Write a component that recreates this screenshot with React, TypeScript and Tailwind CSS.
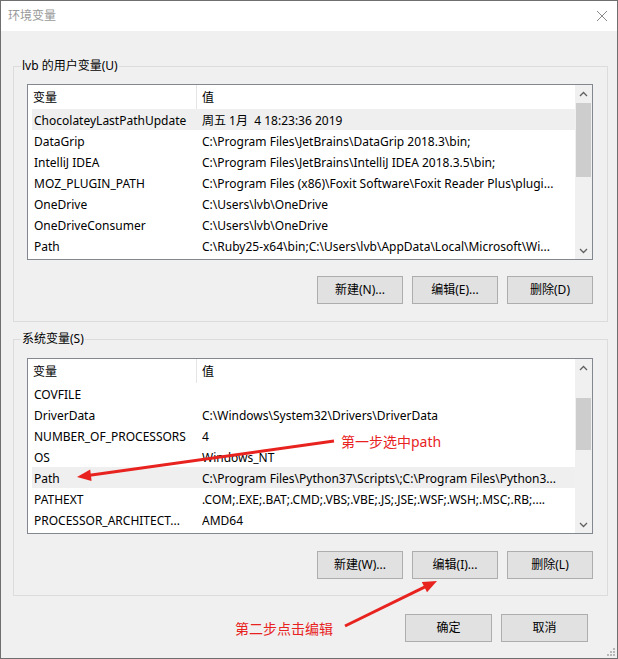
import React from "react";

const FONT = { fontFamily: '"Noto Sans", "Noto Sans CJK SC", sans-serif' };

type Row = [string, string];

const userRows: Row[] = [
  ["ChocolateyLastPathUpdate", "周五 1月  4 18:23:36 2019"],
  ["DataGrip", "C:\\Program Files\\JetBrains\\DataGrip 2018.3\\bin;"],
  ["IntelliJ IDEA", "C:\\Program Files\\JetBrains\\IntelliJ IDEA 2018.3.5\\bin;"],
  ["MOZ_PLUGIN_PATH", "C:\\Program Files (x86)\\Foxit Software\\Foxit Reader Plus\\plugi..."],
  ["OneDrive", "C:\\Users\\lvb\\OneDrive"],
  ["OneDriveConsumer", "C:\\Users\\lvb\\OneDrive"],
  ["Path", "C:\\Ruby25-x64\\bin;C:\\Users\\lvb\\AppData\\Local\\Microsoft\\Wi..."],
];

const sysRows: Row[] = [
  ["COVFILE", ""],
  ["DriverData", "C:\\Windows\\System32\\Drivers\\DriverData"],
  ["NUMBER_OF_PROCESSORS", "4"],
  ["OS", "Windows_NT"],
  ["Path", "C:\\Program Files\\Python37\\Scripts\\;C:\\Program Files\\Python3..."],
  ["PATHEXT", ".COM;.EXE;.BAT;.CMD;.VBS;.VBE;.JS;.JSE;.WSF;.WSH;.MSC;.RB;...."],
  ["PROCESSOR_ARCHITECT...", "AMD64"],
];

function Chevron({ up }: { up: boolean }) {
  return (
    <svg width="9" height="6" viewBox="0 0 9 6">
      <path
        d={up ? "M1 5 L4.5 1.5 L8 5" : "M1 1 L4.5 4.5 L8 1"}
        fill="none"
        stroke="#606060"
        strokeWidth="1.3"
      />
    </svg>
  );
}

function ListBox({
  rows,
  selected,
  thumbTop,
  thumbHeight,
}: {
  rows: Row[];
  selected: number;
  thumbTop: number;
  thumbHeight: number;
}) {
  return (
    <div className="flex h-[176px] border border-[#828790] bg-white">
      <div className="flex min-w-0 flex-1 flex-col overflow-hidden">
        <div className="flex h-[24px] shrink-0 items-center pt-[2px]">
          <div className="w-[168px] pl-[5px]">变量</div>
          <div className="-mt-[2px] h-[24px] w-px bg-[#e5e5e5]" />
          <div className="pl-[5px]">值</div>
        </div>
        {rows.map(([k, v], i) => (
          <div
            key={i}
            className={`ml-[4px] flex h-[21px] shrink-0 items-center whitespace-pre pt-[2px] ${
              i === selected ? "bg-[#efefef]" : ""
            }`}
          >
            <div className="w-[170px] shrink-0 pl-[2px]">{k}</div>
            <div className="min-w-0 flex-1 overflow-hidden">{v}</div>
          </div>
        ))}
      </div>
      <div className="flex w-[17px] shrink-0 flex-col bg-[#f0f0f0]">
        <div className="flex h-[17px] shrink-0 items-center justify-center">
          <Chevron up />
        </div>
        <div className="flex-1">
          <div
            className="mx-[1px] bg-[#cdcdcd]"
            style={{ marginTop: thumbTop, height: thumbHeight }}
          />
        </div>
        <div className="flex h-[17px] shrink-0 items-center justify-center">
          <Chevron up={false} />
        </div>
      </div>
    </div>
  );
}

function Btn({ label, w = "w-[86px]" }: { label: string; w?: string }) {
  return (
    <div
      className={`${w} flex h-[28px] items-center justify-center border border-[#adadad] bg-[#e1e1e1]`}
    >
      {label}
    </div>
  );
}

export default function App() {
  return (
    <div
      className="relative flex h-[659px] w-[618px] flex-col border border-[#6f6f6f] bg-[#f0f0f0] text-[12px] leading-[16px] text-black"
      style={FONT}
    >
      {/* Title bar */}
      <div className="flex h-[30px] shrink-0 items-center justify-between bg-white pl-[7px] pr-[5px]">
        <span className="text-[12px] text-[#999999]">环境变量</span>
        <svg width="12" height="12" viewBox="0 0 12 12" className="mr-[4px]">
          <path d="M1 1 L11 11 M11 1 L1 11" stroke="#8a8a8a" strokeWidth="1" />
        </svg>
      </div>

      <div className="flex flex-1 flex-col pl-[12px] pr-[9px]">
        <fieldset className="mt-[27px] border border-[#dcdcdc] pb-[17px] pl-[13px] pr-[14px] pt-[10px]">
          <legend className="-ml-[6px] px-[1px]">lvb 的用户变量(U)</legend>
          <ListBox rows={userRows} selected={0} thumbTop={1} thumbHeight={74} />
          <div className="mt-[16px] flex justify-end gap-[9px]">
            <Btn label="新建(N)..." />
            <Btn label="编辑(E)..." />
            <Btn label="删除(D)" />
          </div>
        </fieldset>

        <fieldset className="mt-[9px] border border-[#dcdcdc] pb-[16px] pl-[13px] pr-[14px] pt-[11px]">
          <legend className="-ml-[6px] px-[1px]">系统变量(S)</legend>
          <ListBox rows={sysRows} selected={4} thumbTop={22} thumbHeight={52} />
          <div className="mt-[17px] flex justify-end gap-[9px]">
            <Btn label="新建(W)..." />
            <Btn label="编辑(I)..." />
            <Btn label="删除(L)" />
          </div>
        </fieldset>

        <div className="mt-[18px] flex justify-end gap-[9px] pr-[20px]">
          <Btn label="确定" w="w-[87px]" />
          <Btn label="取消" w="w-[87px]" />
        </div>
      </div>

      {/* Annotations */}
      <svg
        className="pointer-events-none absolute left-[-1px] top-[-1px]"
        width="618"
        height="659"
        viewBox="0 0 618 659"
      >
        <line x1="334" y1="441" x2="88" y2="475.4" stroke="#e8231f" strokeWidth="3" />
        <polygon points="77,477 91.6,481 90.2,469.6" fill="#e8231f" />
        <line x1="345" y1="626" x2="426" y2="586.4" stroke="#e8231f" strokeWidth="3" />
        <polygon points="437,581 427,592.2 421.8,582" fill="#e8231f" />
      </svg>
      <div className="pointer-events-none absolute left-[340px] top-[432px] whitespace-nowrap text-[14px] leading-[18px] text-[#e8231f]">
        第一步选中path
      </div>
      <div className="pointer-events-none absolute left-[234px] top-[619px] whitespace-nowrap text-[14px] leading-[18px] text-[#e8231f]">
        第二步点击编辑
      </div>

      {/* resize grip */}
      <svg className="absolute bottom-[1px] right-[1px]" width="10" height="10" viewBox="0 0 10 10">
        <rect x="7" y="1" width="2" height="2" fill="#b8b8b8" />
        <rect x="4" y="4" width="2" height="2" fill="#b8b8b8" />
        <rect x="7" y="4" width="2" height="2" fill="#b8b8b8" />
        <rect x="1" y="7" width="2" height="2" fill="#b8b8b8" />
        <rect x="4" y="7" width="2" height="2" fill="#b8b8b8" />
        <rect x="7" y="7" width="2" height="2" fill="#b8b8b8" />
      </svg>
    </div>
  );
}
